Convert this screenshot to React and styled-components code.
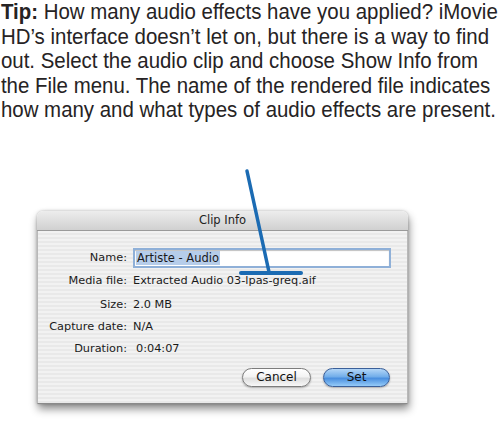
import React from "react";
import styled, { createGlobalStyle } from "styled-components";

const Global = createGlobalStyle`
  html, body { margin: 0; padding: 0; background: #ffffff; }
  body { width: 500px; height: 430px; overflow: hidden; }
`;

const Page = styled.div`
  position: relative;
  width: 500px;
  height: 430px;
  background: #fff;
  overflow: hidden;
`;

const Tip = styled.p`
  margin: 0;
  padding: 0 0 0 1px;
  font-family: "Liberation Sans", Arial, sans-serif;
  font-size: 22px;
  line-height: 24.6px;
  color: #262324;
  white-space: nowrap;
  transform: scaleX(0.929);
  transform-origin: left top;
`;

const Strong = styled.b`
  font-weight: 700;
`;

const Window = styled.div`
  margin: 88px 0 0 37px;
  width: 371px;
  border-radius: 6px 6px 0 0;
  box-shadow: 1px 5px 9px rgba(0, 0, 0, 0.45), 0 0 3px rgba(0, 0, 0, 0.25);
  font-family: "DejaVu Sans", "Liberation Sans", sans-serif;
  font-size: 11.3px;
  color: #1a1a1a;
  overflow: hidden;
`;

const TitleBar = styled.div`
  height: 19px;
  display: flex;
  align-items: center;
  justify-content: center;
  background: linear-gradient(#ededed, #d0d0d0);
  border-bottom: 1px solid #9a9a9a;
  font-size: 11.5px;
  color: #222;
`;

const Body = styled.div`
  padding: 17px 16px 16px 0;
  background: repeating-linear-gradient(#f2f2f2 0 2px, #e9e9e9 2px 4px);
  border-left: 1px solid #b8b8b8;
  border-right: 1px solid #b8b8b8;
  border-bottom: 1px solid #8a8a8a;
`;

const Grid = styled.div`
  display: grid;
  grid-template-columns: 89px 1fr;
  column-gap: 6px;
  grid-auto-rows: 22px;
  grid-template-rows: 20px 26px;
  align-items: center;
`;

const Label = styled.div`
  text-align: right;
  white-space: nowrap;
`;

const Value = styled.div`
  white-space: nowrap;
  padding-left: ${(p) => p.$indent || 0}px;
`;

const Field = styled.div`
  height: 16px;
  border: 2px solid #8fb0d8;
  box-shadow: inset 0 1px 1px rgba(0, 0, 0, 0.25);
  background: #fff;
  display: flex;
  align-items: center;
  padding-left: 1px;
  font-size: 11.5px;
`;

const Selected = styled.span`
  background: #b6cdea;
  padding: 0 1px;
`;

const Buttons = styled.div`
  display: flex;
  justify-content: flex-end;
  gap: 12px;
  margin-top: 8px;
  padding-right: 1px;
`;

const Button = styled.div`
  height: 17px;
  width: ${(p) => p.$w}px;
  border-radius: 10px;
  border: 1px solid ${(p) => (p.$primary ? "#3a5f99" : "#7c7c7c")};
  display: flex;
  align-items: center;
  justify-content: center;
  font-size: 12px;
  color: #111;
  background: ${(p) =>
    p.$primary
      ? "linear-gradient(#b3d6f7 0%, #72aeea 45%, #4a8fdf 55%, #95cbf8 100%)"
      : "linear-gradient(#ffffff 0%, #f3f3f3 45%, #dedede 55%, #f8f8f8 100%)"};
  box-shadow: 0 1px 2px rgba(0, 0, 0, 0.3);
`;

const Pointer = styled.svg`
  position: absolute;
  left: 0;
  top: 0;
  pointer-events: none;
`;

export default function App() {
  return (
    <Page>
      <Global />
      <Tip>
        <Strong>Tip:</Strong> How many audio effects have you applied? iMovie
        <br />
        HD’s interface doesn’t let on, but there is a way to find
        <br />
        out. Select the audio clip and choose Show Info from
        <br />
        the File menu. The name of the rendered file indicates
        <br />
        how many and what types of audio effects are present.
      </Tip>
      <Window>
        <TitleBar>Clip Info</TitleBar>
        <Body>
          <Grid>
            <Label>Name:</Label>
            <Field>
              <Selected>Artiste - Audio</Selected>
            </Field>
            <Label>Media file:</Label>
            <Value>Extracted Audio 03-lpas-greq.aif</Value>
            <Label>Size:</Label>
            <Value>2.0 MB</Value>
            <Label>Capture date:</Label>
            <Value>N/A</Value>
            <Label>Duration:</Label>
            <Value $indent={3}>0:04:07</Value>
          </Grid>
          <Buttons>
            <Button $w={67}>Cancel</Button>
            <Button $w={65} $primary>
              Set
            </Button>
          </Buttons>
        </Body>
      </Window>
      <Pointer width="500" height="430" viewBox="0 0 500 430">
        <path
          d="M247 171 L269 272"
          stroke="#1b6bb3"
          strokeWidth="3.5"
          strokeLinecap="round"
          fill="none"
        />
        <path
          d="M241 273 L301 273"
          stroke="#1b6bb3"
          strokeWidth="4"
          strokeLinecap="round"
          fill="none"
        />
      </Pointer>
    </Page>
  );
}
